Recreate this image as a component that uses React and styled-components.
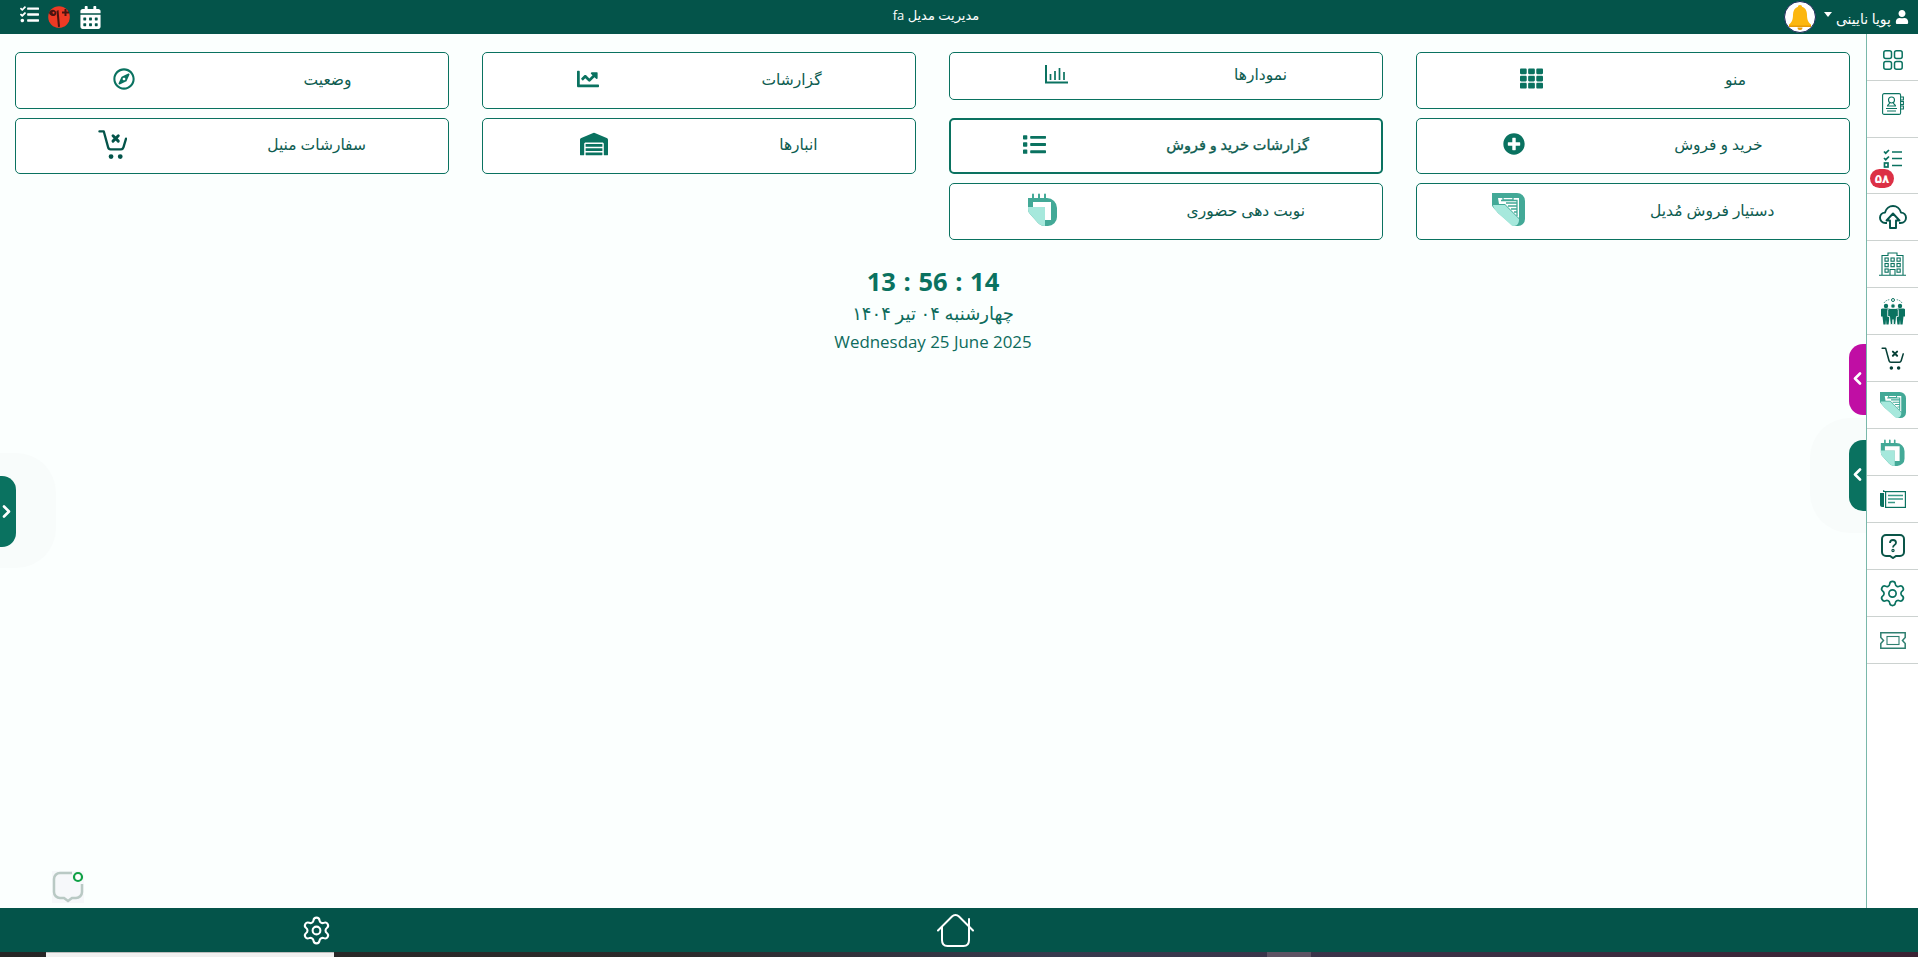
import React from "react";
import styled, { createGlobalStyle } from "styled-components";
import { FaRegCompass, FaTh, FaPlusCircle, FaChartLine, FaWarehouse, FaList, FaUser, FaCalendarAlt, FaTasks } from "react-icons/fa";
import { Settings } from "lucide-react";

const DARK = "#04544a";
const TEAL = "#0a7260";
const FONT = `"Open Sans", "DejaVu Sans", sans-serif`;

const Global = createGlobalStyle`
  html, body { margin: 0; padding: 0; height: 100%; overflow: hidden; background: #fbfffe; }
  #root { height: 100%; }
  * { box-sizing: border-box; }
`;
const Page = styled.div`
  height: 957px; display: flex; flex-direction: column; font-family: ${FONT}; position: relative;
`;
const Header = styled.header`
  height: 34px; flex: none; background: ${DARK}; color: #fff; display: flex; align-items: center;
  justify-content: space-between; padding: 0 9px 0 20px;
`;
const HeaderGroup = styled.div`
  display: flex; align-items: center; gap: ${p => p.$gap || 0}px; height: 100%;
`;
const Title = styled.div`
  font-size: 13px; direction: rtl; padding-bottom: 5px; margin-right: 14px;
`;
const UserName = styled.span`
  font-size: 14px; direction: rtl; margin: 0 4px; padding-top: 2px; white-space: nowrap;
`;
const BellCircle = styled.div`
  width: 32px; height: 32px; border-radius: 50%; background: #fff; border: 1px solid #1d2a5a;
  display: flex; align-items: center; justify-content: center; margin-right: 8px;
`;
const Caret = styled.span`
  width: 0; height: 0; border-left: 4.5px solid transparent; border-right: 4.5px solid transparent;
  border-top: 5px solid #fff; margin-bottom: 6px;
`;
const TaskIcon = styled.span`
  display: flex; margin-top: -6px;
`;
const Body = styled.div`
  flex: 1; display: flex; min-height: 0;
`;
const Main = styled.main`
  flex: 1; position: relative; min-width: 0; background: #fbfffe;
`;
const Grid = styled.div`
  direction: rtl; display: grid; grid-template-columns: repeat(4, 1fr); grid-template-rows: 57px 56px 57px;
  gap: 9px 33px; padding: 18px 16px 0 15px;
`;
const Card = styled.a`
  display: flex; align-items: center; justify-content: space-around; background: #fff;
  height: ${p => p.$short ? "48px" : "auto"}; align-self: ${p => p.$short ? "start" : "stretch"};
  grid-row: ${p => p.$row}; grid-column: ${p => p.$col}; padding: 0 12px 4px;
  border: ${p => p.$active ? 2 : 1}px solid ${TEAL}; border-radius: 5px; color: #0d5c50;
  font-size: ${p => p.$active ? 14.5 : 15.5}px;
  -webkit-text-stroke: ${p => p.$active ? "0.35px" : "0"};
`;
const CardIcon = styled.span`
  display: flex; color: ${TEAL};
`;
const Clock = styled.div`
  display: flex; flex-direction: column; align-items: center; color: ${TEAL}; padding-top: 23px;
`;
const Time = styled.div`
  font-size: 25.5px; font-weight: 700; line-height: 36px; word-spacing: 1px;
`;
const Jalali = styled.div`
  font-size: 18px; line-height: 28px; direction: rtl; color: #0d6b5c;
`;
const Gregorian = styled.div`
  font-size: 16.9px; line-height: 30px; color: #0d6b5c;
`;
const Halo = styled.div`
  position: absolute; width: 56px; height: 115px; top: ${p => p.$top}px;
  ${p => p.$left ? "left: 0; border-radius: 0 40px 40px 0;" : "right: 0; border-radius: 40px 0 0 40px;"}
  background: #f8fcfb;
`;
const Tab = styled.button`
  position: absolute; height: 71px; top: ${p => p.$top}px; border: none;
  background: ${p => p.$color}; display: flex; align-items: center; justify-content: center;
  ${p => p.$left
    ? "left: 0; width: 16px; padding: 0 4px 0 0; border-radius: 0 14px 14px 0;"
    : "right: 0; width: 17px; padding: 0 0 3px; border-radius: 14px 0 0 14px;"}
`;
const Chat = styled.div`
  position: absolute; left: 52px; bottom: 5px; width: 32px; height: 32px; display: flex;
`;
const Side = styled.aside`
  width: 52px; flex: none; background: #fff; border-left: 1px solid #79b8aa; display: flex; flex-direction: column;
`;
const SideRow = styled.div`
  position: relative; height: ${p => p.$h || 47}px; flex: none; border-bottom: 1px solid #ccd2d0;
  display: flex; align-items: center; justify-content: center; padding: ${p => p.$pt || 0}px 0 ${p => p.$pb || 0}px;
`;
const Badge = styled.span`
  position: absolute; left: 3px; top: 31px; width: 24px; height: 19px; border-radius: 10px; background: #dc3045;
  color: #fff; font-size: 12px; font-weight: 700; display: flex; align-items: center; justify-content: center;
  font-family: "DejaVu Sans", sans-serif;
`;
const Footer = styled.footer`
  height: 44px; flex: none; background: ${DARK}; color: #fff; display: grid; grid-template-columns: repeat(3, 1fr);
  align-items: center; justify-items: center; padding-right: 6px;
`;
const FooterGear = styled.span`
  display: flex; margin-right: 4px;
`;
const Strip = styled.div`
  height: 5px; flex: none; display: flex; background: linear-gradient(90deg, #262626 0%, #2b2a2a 35%, #363a4e 55%, #3a3349 70%, #3a2233 100%);
`;
const StripWindow = styled.div`
  width: 288px; margin-left: 46px; background: #f0f0f0; border-top: 1px solid #bdbdbd;
`;
const StripThumb = styled.div`
  width: 44px; margin-left: 933px; background: #5d5364;
`;

const Bars = () => (
  <svg width="23" height="19" viewBox="0 0 23 19" fill="none" stroke="currentColor">
    <path d="M1 0v17.5h22" strokeWidth="2" />
    <path d="M5.5 9v6M10 6v9M14.5 3v12M19 7v8" strokeWidth="1.7" />
  </svg>
);
const CartX = ({ s = 29, w = 2.4, color = "#04544a" }) => (
  <svg width={s} height={s} viewBox="0 0 29 30" fill="none" stroke={color} strokeWidth={w} strokeLinecap="round" strokeLinejoin="round">
    <path d="M1 1.5h4.5L10 18c.3 1.2 1 2 2.4 2h11c1.3 0 2-.7 2.4-2L28.5 9" />
    <path d="M15 6l5.5 5.5M20.5 6L15 11.5" strokeWidth={w + 0.6} />
    <circle cx="13" cy="27.5" r="1.3" fill={color} />
    <circle cx="22.5" cy="27.5" r="1.3" fill={color} />
  </svg>
);
const AssistantIcon = ({ s = 33 }) => (
  <svg width={s} height={s} viewBox="0 0 33 33">
    <path fill="#43a997" d="M0 0H25a8 8 0 0 1 8 8v18a7 7 0 0 1-7 7h-3c-2 0-3-1-4-2L6 20C3 16 0 14 0 12z" />
    <path fill="#a6e8dc" d="M1 12h12l14 14v1c0 3-2 6-5 6-2 0-3-1-4-2L6 20C3 17 1 14 1 12z" />
    <path fill="#fff" d="M6 5h21v20L13 11H7z" />
    <path fill="none" stroke="#43a997" strokeWidth="1.300" d="M11 3h10v4H11zM14 10h11M16 13h9M19 16h6M22 19h3M9 7.500h16V23" />
  </svg>
);
const TurnIcon = ({ s = 33 }) => (
  <svg width={s * 30 / 33} height={s} viewBox="0 0 30 33">
    <path fill="#43a997" d="M1 5h19a10 10 0 0 1 10 10v9a9 9 0 0 1-9 9h-3c-3 0-5-1-7-3L3 21C1 19 1 17 1 14z" />
    <path fill="#a6e8dc" d="M1 14h17v19c-3 0-5-1-7-3L3 21C1 19 1 17 1 14z" />
    <path fill="#fff" d="M6 9h18v18h-6V14H6z" />
    <path stroke="#43a997" strokeWidth="2" strokeLinecap="round" d="M6 1.500v5M12 1.500v5M18 1.500v5" />
  </svg>
);
const BellIcon = () => (
  <svg width="28" height="28" viewBox="0 0 28 28">
    <path fill="#fcb70f" d="M14 2c-1.500 0-2 .8-2 1.800C8.500 5 7 8 7 12c0 5-1.500 7.500-4 9.500V23h22v-1.500C22.500 19.500 21 17 21 12c0-4-1.500-7-5-8.200C16 2.800 15.500 2 14 2z" />
    <path fill="#e69a05" d="M3 22.500h22V24H3zM11.500 24.500h5a2.500 2.500 0 0 1-5 0z" />
  </svg>
);
const RedBadge = () => (
  <svg width="22" height="22" viewBox="0 0 22 22">
    <circle cx="11" cy="11" r="10.800" fill="#ee3a24" />
    <path fill="#4a1410" d="M1 7c1-3 4-4 6-2.500s1.500 5-1 5.500c-2 .3-4-.5-5-3zm3.500-.5c0 1 .7 1.500 1.500 1.200.7-.3.700-1.500 0-1.900-.8-.3-1.500 0-1.500.7zM8.500 5l1.500 16 2-.2L10.500 4z" />
    <path stroke="#4a1410" strokeWidth="2" d="M14 6.500h7M17.500 3v7" />
  </svg>
);
const GridIcon = () => (
  <svg width="20" height="20" viewBox="0 0 20 20" fill="none" stroke={TEAL} strokeWidth="1.500">
    <rect x=".8" y=".8" width="7.700" height="7.700" rx="2" /><rect x="11.500" y=".8" width="7.700" height="7.700" rx="2" />
    <rect x=".8" y="11.500" width="7.700" height="7.700" rx="2" /><rect x="11.500" y="11.500" width="7.700" height="7.700" rx="2" />
  </svg>
);
const ContactBook = () => (
  <svg width="22" height="22" viewBox="0 0 22 22" fill="none" stroke={TEAL} strokeWidth="1.100">
    <rect x=".6" y=".6" width="18" height="20.800" rx="1.500" />
    <path d="M19 4h2.400v3H19M19 8.500h2.400v3H19M19 13h2.400v3H19" />
    <circle cx="9.500" cy="7" r="3" />
    <path d="M7.500 10c0 1.500-2 1.500-2 3h8c0-1.500-2-1.500-2-3M4 15.500h11M5 18h9" />
  </svg>
);
const Checklist = () => (
  <svg width="19" height="21" viewBox="0 0 19 21" fill="none" stroke={TEAL} strokeWidth="1.700">
    <path d="M1 2.500l1.700 1.700L6 1M1 9l1.700 1.700L6 7.500M9 3h10M9 9.500h10M9 16.500h10" />
    <rect x="1.500" y="14" width="3.500" height="4" />
  </svg>
);
const CloudUp = () => (
  <svg width="28" height="24" viewBox="0 0 28 24" fill="none" stroke={DARK} strokeWidth="1.900" strokeLinejoin="round">
    <path d="M8 18H6.500C3 18 1 15.500 1 12.800s2-5 5-5.200C7 3.500 10.500 1 14 1s7 2.500 8 6.600c3 .2 5 2.500 5 5.200S25 18 21.500 18H20" />
    <path d="M14 8.500l-6.500 7H11V23h6v-7.500h3.500z" />
  </svg>
);
const Building = () => (
  <svg width="27" height="24" viewBox="0 0 27 24" fill="none" stroke={TEAL} strokeWidth="1.100">
    <path d="M0 23.300h27M3 23V3.500h6V1h9v2.500h6V23M11 23v-5.500h5V23" />
    {[[6, 6], [12, 6], [18, 6], [6, 11.500], [12, 11.500], [18, 11.500], [6, 17], [18, 17]].map(([x, y]) => (
      <rect key={x + "-" + y} x={x} y={y} width="3.200" height="3.200" />
    ))}
  </svg>
);
const Person = ({ x, front }) => (
  <g fill={TEAL} stroke={front ? "#fff" : "none"} strokeWidth=".8">
    <circle cx={x} cy="8" r="2.200" />
    <path d={`M${x - 3.500} 10.500h7c1 0 1.800.8 1.800 2v6h-1.800l-.9 8h-2.200l-.4-5-.4 5h-2.200l-.9-8H${x - 5.300}v-6c0-1.200.8-2 1.800-2z`} />
  </g>
);
const People = () => (
  <svg width="24" height="27" viewBox="0 0 24 27">
    <circle cx="12" cy="2" r="1.500" fill="none" stroke={TEAL} strokeWidth="1" />
    <path d="M3 5c1-2 3-3 6-3.500M21 5c-1-2-3-3-6-3.500" fill="none" stroke={TEAL} strokeWidth=".7" strokeDasharray="1.500 1" />
    <Person x={5} /><Person x={19} /><Person x={12} front />
  </svg>
);
const News = () => (
  <svg width="26" height="18" viewBox="0 0 26 18">
    <path fill={TEAL} d="M0 3h4v14H2c-1 0-2-1-2-2zM3 0l2 1v1H3z" />
    <rect x="5.600" y="1.600" width="19.800" height="15.800" fill="#fff" stroke={TEAL} strokeWidth="1.200" />
    <path stroke="#3b9a88" strokeWidth="1.300" d="M8 5.500h15M8 9h15M8 12.500h7" />
  </svg>
);
const Question = () => (
  <svg width="24" height="25" viewBox="0 0 24 25" fill="none" stroke="#0a5548">
    <path strokeWidth="2" d="M5 1h14a4 4 0 0 1 4 4v13a4 4 0 0 1-4 4h-4l-3 2-3-2H5a4 4 0 0 1-4-4V5a4 4 0 0 1 4-4z" />
    <path strokeWidth="1.800" d="M9 9c0-2 1.300-3 3-3s3 1 3 2.800c0 2.200-3 2-3 4.700" />
    <circle cx="12" cy="16.500" r="1.100" strokeWidth="1.200" />
  </svg>
);
const Ticket = () => (
  <svg width="26" height="17" viewBox="0 0 26 17" fill="none" stroke="#2f7f70" strokeWidth="1.500">
    <path d="M.8.8h24.400v4.700l-2.700 3 2.700 3v4.700H.8v-4.700l2.700-3-2.700-3z" />
    <rect x="7" y="4.500" width="12" height="8" strokeWidth="1.100" />
  </svg>
);
const ChatIcon = () => (
  <svg width="32" height="32" viewBox="0 0 32 32" fill="none">
    <rect width="32" height="32" fill="#f6f8fa" />
    <path stroke="#b9c9c4" strokeWidth="2.500" d="M20 2H8a6 6 0 0 0-6 6v13a6 6 0 0 0 6 6h4l4 3 4-3h4a6 6 0 0 0 6-6V13" />
    <circle cx="26" cy="6" r="4" stroke="#0fa045" strokeWidth="2.200" fill="#fff" />
  </svg>
);
const HomeIcon = () => (
  <svg width="37" height="34" viewBox="0 0 37 34" fill="none" stroke="#fff" strokeWidth="2" strokeLinecap="round" strokeLinejoin="round">
    <path d="M1 17.500L15 3.500c2-2 5-2 7 0l14 14" />
    <path d="M32 6v8" />
    <path d="M5 14v13c0 3.500 2 6 5.500 6h16c3.500 0 5.500-2.500 5.500-6V14" />
  </svg>
);
const Chevron = ({ dir }) => (
  <svg width="9" height="13" viewBox="0 0 9 13" fill="none" stroke="#fff" strokeWidth="2.600" strokeLinecap="round" strokeLinejoin="round">
    <path d={dir === "left" ? "M7 1.500L2 6.500l5 5" : "M2 1.500l5 5-5 5"} />
  </svg>
);

const cards = [
  { t: "منو", r: 1, c: 1, i: <FaTh size={23} /> },
  { t: "خرید و فروش", r: 2, c: 1, i: <FaPlusCircle size={22} /> },
  { t: "دستیار فروش مُدیل", r: 3, c: 1, i: <AssistantIcon /> },
  { t: "نمودارها", r: 1, c: 2, short: true, i: <Bars /> },
  { t: "گزارشات خرید و فروش", r: 2, c: 2, active: true, i: <FaList size={23} /> },
  { t: "نوبت دهی حضوری", r: 3, c: 2, i: <TurnIcon /> },
  { t: "گزارشات", r: 1, c: 3, i: <FaChartLine size={22} /> },
  { t: "انبارها", r: 2, c: 3, i: <FaWarehouse size={28} /> },
  { t: "وضعیت", r: 1, c: 4, i: <FaRegCompass size={22} /> },
  { t: "سفارشات منیل", r: 2, c: 4, i: <CartX /> },
];

const sideRows = [
  { h: 47, pt: 5, i: <GridIcon /> },
  { h: 57, pb: 11, i: <ContactBook /> },
  { h: 56, pb: 12, i: <Checklist />, badge: "۵۸" },
  { i: <CloudUp /> },
  { i: <Building /> },
  { i: <People /> },
  { i: <CartX s={23} w={2} color="#063f36" /> },
  { i: <AssistantIcon s={26} /> },
  { i: <TurnIcon s={27} /> },
  { i: <News /> },
  { i: <Question /> },
  { i: <Settings size={29} strokeWidth={1.4} color={TEAL} /> },
  { i: <Ticket /> },
];

export default function App() {
  return (
    <Page>
      <Global />
      <Header>
        <HeaderGroup $gap={9}>
          <TaskIcon><FaTasks size={19} /></TaskIcon>
          <RedBadge />
          <FaCalendarAlt size={23} />
        </HeaderGroup>
        <Title>مدیریت مدیل fa</Title>
        <HeaderGroup>
          <BellCircle><BellIcon /></BellCircle>
          <Caret />
          <UserName>پویا نایینی</UserName>
          <FaUser size={14} />
        </HeaderGroup>
      </Header>
      <Body>
        <Main>
          <Grid>
            {cards.map(c => (
              <Card key={c.t} $row={c.r} $col={c.c} $short={c.short} $active={c.active}>
                <span>{c.t}</span>
                <CardIcon>{c.i}</CardIcon>
              </Card>
            ))}
          </Grid>
          <Clock>
            <Time>13 : 56 : 14</Time>
            <Jalali>چهارشنبه ۰۴ تیر ۱۴۰۴</Jalali>
            <Gregorian>Wednesday 25 June 2025</Gregorian>
          </Clock>
          <Halo $left $top={419} />
          <Halo $top={384} />
          <Tab $left $top={442} $color={TEAL}><Chevron dir="right" /></Tab>
          <Tab $top={310} $color="#c00ea4"><Chevron dir="left" /></Tab>
          <Tab $top={406} $color={TEAL}><Chevron dir="left" /></Tab>
          <Chat><ChatIcon /></Chat>
        </Main>
        <Side>
          {sideRows.map((r, n) => (
            <SideRow key={n} $h={r.h} $pt={r.pt} $pb={r.pb}>
              {r.i}
              {r.badge && <Badge>{r.badge}</Badge>}
            </SideRow>
          ))}
        </Side>
      </Body>
      <Footer>
        <FooterGear><Settings size={31} strokeWidth={1.6} /></FooterGear>
        <HomeIcon />
      </Footer>
      <Strip>
        <StripWindow />
        <StripThumb />
      </Strip>
    </Page>
  );
}
